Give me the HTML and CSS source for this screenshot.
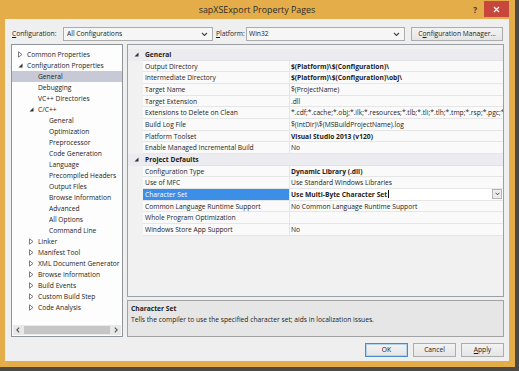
FILE: index.html
```html
<!DOCTYPE html>
<html>
<head>
<meta charset="utf-8">
<title>sapXSExport Property Pages</title>
<link rel="stylesheet" href="styles.css">
</head>
<body>
<div class="window">
  <div class="titlebar">
    <div class="tb-side"></div>
    <div class="title">sapXSExport Property Pages</div>
    <div class="tb-side tb-controls">
      <span class="help">?</span>
      <span class="close"><svg width="7" height="7" viewBox="0 0 7 7"><path d="M1 1L6 6M6 1L1 6" stroke="#fff" stroke-width="1.2"/></svg></span>
    </div>
  </div>
  <div class="client">
    <div class="toprow">
      <span class="lbl lbl-config"><u>C</u>onfiguration:</span>
      <div class="combo combo-config"><span class="combo-text">All Configurations</span><svg class="chev" width="7" height="5" viewBox="0 0 7 5"><path d="M1 1L3.5 3.5L6 1" fill="none" stroke="#444" stroke-width="1.1"/></svg></div>
      <span class="lbl lbl-platform"><u>P</u>latform:</span>
      <div class="combo combo-platform"><span class="combo-text">Win32</span><svg class="chev" width="7" height="5" viewBox="0 0 7 5"><path d="M1 1L3.5 3.5L6 1" fill="none" stroke="#444" stroke-width="1.1"/></svg></div>
      <button class="btn btn-mgr">C<u>o</u>nfiguration Manager...</button>
    </div>
    <div class="main">
      <div class="tree">
        <ul class="tree-list">
          <li class="ti l0"><span class="exp"><svg width="5" height="7" viewBox="0 0 5 7"><path d="M0.5 0.8L4 3.5L0.5 6.2Z" fill="none" stroke="#6d6d6d" stroke-width="0.9"/></svg></span>Common Properties</li>
          <li class="ti l0"><span class="exp"><svg width="5" height="5" viewBox="0 0 5 5"><path d="M4.5 0.5L4.5 4.5L0.5 4.5Z" fill="#333"/></svg></span>Configuration Properties</li>
          <li class="ti l1 sel"><span class="exp"></span>General</li>
          <li class="ti l1"><span class="exp"></span>Debugging</li>
          <li class="ti l1"><span class="exp"></span>VC++ Directories</li>
          <li class="ti l1"><span class="exp"><svg width="5" height="5" viewBox="0 0 5 5"><path d="M4.5 0.5L4.5 4.5L0.5 4.5Z" fill="#333"/></svg></span>C/C++</li>
          <li class="ti l2"><span class="exp"></span>General</li>
          <li class="ti l2"><span class="exp"></span>Optimization</li>
          <li class="ti l2"><span class="exp"></span>Preprocessor</li>
          <li class="ti l2"><span class="exp"></span>Code Generation</li>
          <li class="ti l2"><span class="exp"></span>Language</li>
          <li class="ti l2"><span class="exp"></span>Precompiled Headers</li>
          <li class="ti l2"><span class="exp"></span>Output Files</li>
          <li class="ti l2"><span class="exp"></span>Browse Information</li>
          <li class="ti l2"><span class="exp"></span>Advanced</li>
          <li class="ti l2"><span class="exp"></span>All Options</li>
          <li class="ti l2"><span class="exp"></span>Command Line</li>
          <li class="ti l1"><span class="exp"><svg width="5" height="7" viewBox="0 0 5 7"><path d="M0.5 0.8L4 3.5L0.5 6.2Z" fill="none" stroke="#6d6d6d" stroke-width="0.9"/></svg></span>Linker</li>
          <li class="ti l1"><span class="exp"><svg width="5" height="7" viewBox="0 0 5 7"><path d="M0.5 0.8L4 3.5L0.5 6.2Z" fill="none" stroke="#6d6d6d" stroke-width="0.9"/></svg></span>Manifest Tool</li>
          <li class="ti l1"><span class="exp"><svg width="5" height="7" viewBox="0 0 5 7"><path d="M0.5 0.8L4 3.5L0.5 6.2Z" fill="none" stroke="#6d6d6d" stroke-width="0.9"/></svg></span>XML Document Generator</li>
          <li class="ti l1"><span class="exp"><svg width="5" height="7" viewBox="0 0 5 7"><path d="M0.5 0.8L4 3.5L0.5 6.2Z" fill="none" stroke="#6d6d6d" stroke-width="0.9"/></svg></span>Browse Information</li>
          <li class="ti l1"><span class="exp"><svg width="5" height="7" viewBox="0 0 5 7"><path d="M0.5 0.8L4 3.5L0.5 6.2Z" fill="none" stroke="#6d6d6d" stroke-width="0.9"/></svg></span>Build Events</li>
          <li class="ti l1"><span class="exp"><svg width="5" height="7" viewBox="0 0 5 7"><path d="M0.5 0.8L4 3.5L0.5 6.2Z" fill="none" stroke="#6d6d6d" stroke-width="0.9"/></svg></span>Custom Build Step</li>
          <li class="ti l1"><span class="exp"><svg width="5" height="7" viewBox="0 0 5 7"><path d="M0.5 0.8L4 3.5L0.5 6.2Z" fill="none" stroke="#6d6d6d" stroke-width="0.9"/></svg></span>Code Analysis</li>
        </ul>
        <div class="hscroll">
          <span class="sb-btn"><svg width="4" height="6" viewBox="0 0 4 6"><path d="M3.2 0.6L0.8 3L3.2 5.4" fill="none" stroke="#555" stroke-width="1.1"/></svg></span>
          <span class="sb-track"><span class="sb-thumb"></span></span>
          <span class="sb-btn"><svg width="4" height="6" viewBox="0 0 4 6"><path d="M0.8 0.6L3.2 3L0.8 5.4" fill="none" stroke="#555" stroke-width="1.1"/></svg></span>
        </div>
      </div>
      <div class="rightcol">
        <div class="grid">
          <div class="grow cat"><span class="gutter"><svg width="5" height="5" viewBox="0 0 5 5"><path d="M4.5 0.5L4.5 4.5L0.5 4.5Z" fill="#333"/></svg></span><span class="gcat">General</span></div>
          <div class="grow"><span class="gutter"></span><span class="gname">Output Directory</span><span class="gval b">$(Platform)\$(Configuration)\</span></div>
          <div class="grow"><span class="gutter"></span><span class="gname">Intermediate Directory</span><span class="gval b">$(Platform)\$(Configuration)\obj\</span></div>
          <div class="grow"><span class="gutter"></span><span class="gname">Target Name</span><span class="gval">$(ProjectName)</span></div>
          <div class="grow"><span class="gutter"></span><span class="gname">Target Extension</span><span class="gval">.dll</span></div>
          <div class="grow"><span class="gutter"></span><span class="gname">Extensions to Delete on Clean</span><span class="gval">*.cdf;*.cache;*.obj;*.ilk;*.resources;*.tlb;*.tli;*.tlh;*.tmp;*.rsp;*.pgc;*.pgd;*.meta;*.tlog;*.manifest</span></div>
          <div class="grow"><span class="gutter"></span><span class="gname">Build Log File</span><span class="gval">$(IntDir)\$(MSBuildProjectName).log</span></div>
          <div class="grow"><span class="gutter"></span><span class="gname">Platform Toolset</span><span class="gval b">Visual Studio 2013 (v120)</span></div>
          <div class="grow"><span class="gutter"></span><span class="gname">Enable Managed Incremental Build</span><span class="gval">No</span></div>
          <div class="grow cat"><span class="gutter"><svg width="5" height="5" viewBox="0 0 5 5"><path d="M4.5 0.5L4.5 4.5L0.5 4.5Z" fill="#333"/></svg></span><span class="gcat">Project Defaults</span></div>
          <div class="grow"><span class="gutter"></span><span class="gname">Configuration Type</span><span class="gval b">Dynamic Library (.dll)</span></div>
          <div class="grow"><span class="gutter"></span><span class="gname">Use of MFC</span><span class="gval">Use Standard Windows Libraries</span></div>
          <div class="grow selrow"><span class="gutter"></span><span class="gname">Character Set</span><span class="gval b editing"><span class="edit-text">Use Multi-Byte Character Set</span><span class="caret"></span><span class="dd"><svg width="5" height="4" viewBox="0 0 5 4"><path d="M0.6 0.8L2.5 2.8L4.4 0.8" fill="none" stroke="#444" stroke-width="1"/></svg></span></span></div>
          <div class="grow"><span class="gutter"></span><span class="gname">Common Language Runtime Support</span><span class="gval">No Common Language Runtime Support</span></div>
          <div class="grow"><span class="gutter"></span><span class="gname">Whole Program Optimization</span><span class="gval"></span></div>
          <div class="grow"><span class="gutter"></span><span class="gname">Windows Store App Support</span><span class="gval">No</span></div>
        </div>
        <div class="desc">
          <div class="desc-title">Character Set</div>
          <div class="desc-text">Tells the compiler to use the specified character set; aids in localization issues.</div>
        </div>
      </div>
    </div>
    <div class="btnrow">
      <button class="btn btn-ok">OK</button>
      <button class="btn">Cancel</button>
      <button class="btn"><u>A</u>pply</button>
    </div>
  </div>
</div>
</body>
</html>
```

FILE: styles.css
```css
* {
  box-sizing: border-box;
  margin: 0;
  padding: 0;
}

html, body {
  width: 519px;
  height: 371px;
  overflow: hidden;
}

body {
  background: #4e4942;
  font-family: "Open Sans", "Noto Sans", sans-serif;
  font-size: 6.7px;
  color: #1c1c1c;
}

u {
  text-decoration: underline;
  text-underline-offset: 1px;
}

.window {
  width: 515px;
  height: 367px;
  background: #e5ad4a;
  padding: 0 6px 6px 5px;
  display: flex;
  flex-direction: column;
}

/* title bar */
.titlebar {
  height: 19px;
  display: grid;
  grid-template-columns: 1fr auto 1fr;
  align-items: center;
}

.title {
  font-size: 8.9px;
  color: #2b2b2b;
  line-height: 19px;
}

.tb-controls {
  display: flex;
  justify-content: flex-end;
  align-items: flex-start;
  height: 19px;
}

.help {
  font-size: 8px;
  font-weight: bold;
  color: #3a3a3a;
  line-height: 19px;
  margin-right: 7px;
}

.close {
  width: 25px;
  height: 16px;
  margin-top: 1px;
  background: #c8473d;
  display: flex;
  align-items: center;
  justify-content: center;
}

/* client */
.client {
  flex: 1;
  background: #efefef;
  padding: 8px 5px 4px 6px;
  display: flex;
  flex-direction: column;
}

.toprow {
  height: 14px;
  display: flex;
  align-items: center;
}

.lbl {
  line-height: 14px;
  white-space: nowrap;
  flex: none;
}

.lbl-config {
  margin-left: 1px;
  width: 51px;
}

.lbl-platform {
  margin-left: 3px;
  width: 30px;
}

.combo {
  height: 14px;
  border: 1px solid #acacac;
  background: #f6f6f6;
  display: flex;
  align-items: center;
  justify-content: space-between;
  padding: 0 4px 0 3px;
  flex: none;
}

.combo-config {
  width: 150px;
}

.combo-platform {
  width: 159px;
  padding-left: 2px;
}

.combo-text {
  line-height: 12px;
}

.btn {
  font-family: inherit;
  font-size: inherit;
  color: #1c1c1c;
  height: 14px;
  border: 1px solid #acacac;
  background: linear-gradient(#f3f3f3, #e5e5e5);
  line-height: 12px;
  white-space: nowrap;
}

.btn-mgr {
  margin-left: 6px;
  width: 92px;
}

/* main area */
.main {
  margin-top: 3px;
  height: 293px;
  display: flex;
  gap: 4px;
}

.tree {
  width: 112px;
  border: 1px solid #8f949b;
  background: #fdfdfd;
  display: flex;
  flex-direction: column;
}

.tree-list {
  list-style: none;
  flex: 1;
  padding-top: 4px;
  overflow: hidden;
}

.ti {
  height: 11px;
  line-height: 11px;
  display: flex;
  align-items: center;
  white-space: nowrap;
}

.ti.l0 { padding-left: 5px; }
.ti.l1 { padding-left: 16px; }
.ti.l2 { padding-left: 27px; }

.ti.sel {
  background: #c8c9d6;
}

.exp {
  width: 10px;
  height: 11px;
  display: flex;
  align-items: center;
  padding-left: 1px;
}

.hscroll {
  height: 10px;
  display: flex;
  background: #e8e8e8;
  margin: 0 1px 1px;
}

.sb-btn {
  width: 10px;
  display: flex;
  align-items: center;
  justify-content: center;
}

.sb-track {
  flex: 1;
  padding: 1px 1px;
  display: flex;
}

.sb-thumb {
  flex: 1;
  background: #c6c6c6;
}

/* right column */
.rightcol {
  width: 377px;
  display: flex;
  flex-direction: column;
  gap: 3px;
}

.grid {
  height: 254px;
  border: 1px solid #9aa0a6;
  background: #f1f1f1;
  padding-top: 4px;
  overflow: hidden;
}

.grow {
  height: 11.67px;
  display: flex;
  align-items: stretch;
  line-height: 11px;
  white-space: nowrap;
}

.gutter {
  width: 15px;
  flex: none;
  display: flex;
  align-items: center;
  padding-left: 6px;
}

.gname {
  width: 147px;
  flex: none;
  padding-left: 2px;
  background: #fafafa;
  border-bottom: 1px solid #e6e6e6;
  border-right: 1px solid #e6e6e6;
  overflow: hidden;
}

.gval {
  flex: 1;
  min-width: 0;
  padding-left: 1px;
  background: #fafafa;
  border-bottom: 1px solid #e6e6e6;
  overflow: hidden;
}

.gval.b {
  font-weight: bold;
}

.grow.cat {
  background: #ebebf0;
}

.gcat {
  font-weight: bold;
  padding-left: 2px;
  border-bottom: 1px solid #e2e2e8;
  flex: 1;
}

.grow.selrow .gname {
  background: #3b8fe6;
  color: #fff;
}

.editing {
  display: flex;
  align-items: center;
  background: #fff;
}

.caret {
  width: 1px;
  height: 8px;
  background: #111;
  margin-left: 1px;
}

.dd {
  margin-left: auto;
  width: 10px;
  height: 10px;
  border: 1px solid #b4b4b4;
  background: #ececec;
  display: flex;
  align-items: center;
  justify-content: center;
  margin-right: 1px;
}

.desc {
  height: 37px;
  border: 1px solid #a2a2a2;
  background: #e6e6e6;
  padding: 2px 3px;
}

.desc-title {
  font-weight: bold;
  line-height: 11px;
}

.desc-text {
  line-height: 12px;
}

.btnrow {
  margin-top: 6px;
  height: 14px;
  display: flex;
  justify-content: flex-end;
  gap: 5px;
}

.btnrow .btn {
  width: 43px;
}

.btn-ok {
  border-color: #4b8ac2;
  box-shadow: inset 0 0 0 1px #b7d3ea;
}
```
